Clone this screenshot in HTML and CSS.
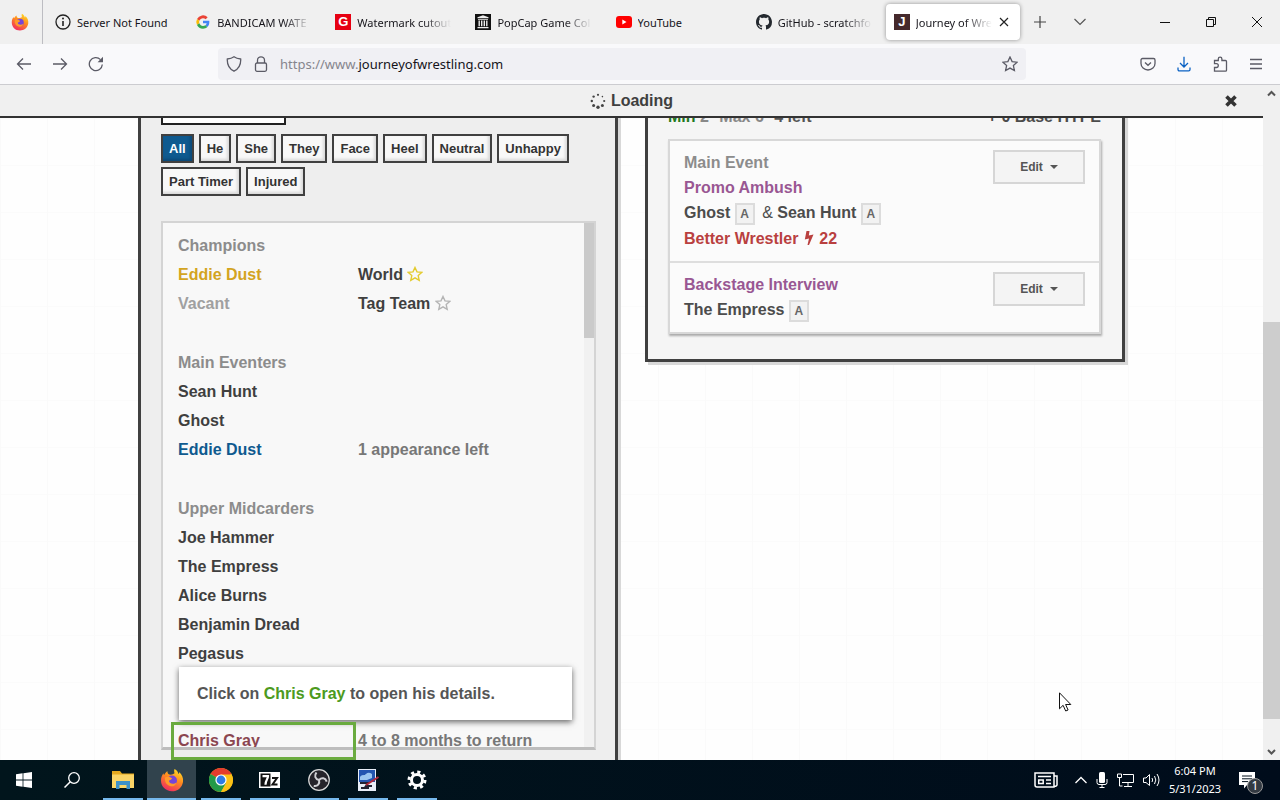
FILE: index.html
```html
<!DOCTYPE html>
<html lang="en">
<head>
<meta charset="utf-8">
<title>Journey of Wrestling</title>
<link rel="stylesheet" href="styles.css">
</head>
<body>
<header class="tabbar">
  <button class="pinned" aria-label="Firefox View">
    <svg width="18" height="18" viewBox="0 0 24 24"><use href="#fox"/></svg>
  </button>
  <div class="tabs">
    <div class="tab"><svg width="16" height="16" viewBox="0 0 16 16"><circle cx="8" cy="8" r="7" fill="none" stroke="#222" stroke-width="1.3"/><path d="M8 7v5" stroke="#222" stroke-width="1.6"/><circle cx="8" cy="4.6" r="1" fill="#222"/></svg><span class="tab-label">Server Not Found</span></div>
    <div class="tab"><svg width="16" height="16" viewBox="0 0 48 48"><path fill="#ea4335" d="M24 13c3 0 6 1 8 3l6-6A20 20 0 0 0 6 15l7 5c2-4 6-7 11-7z"/><path fill="#4285f4" d="M43 24c0-2 0-3-.4-4H24v8h11c-.6 3-2 5-4 6l6 5c4-3 6-9 6-15z"/><path fill="#fbbc05" d="M13 28a12 12 0 0 1 0-8l-7-5a20 20 0 0 0 0 18z"/><path fill="#34a853" d="M24 44c5 0 10-2 13-5l-6-5c-2 1-4 2-7 2-5 0-9-3-11-8l-7 5c3 7 10 11 18 11z"/></svg><span class="tab-label fade">BANDICAM WATE</span></div>
    <div class="tab"><span class="fav fav-red">G</span><span class="tab-label fade">Watermark cutout</span></div>
    <div class="tab"><svg width="16" height="16" viewBox="0 0 16 16"><path fill="#111" d="M0 0h16v16H0z"/><path fill="#eee" d="M8 1.300l5.500 2v1h-11v-1zM3 5h10v.8H3zM3.500 6.400h1.400v5.800H3.500zM6 6.400h1.400v5.800H6zM8.600 6.400H10v5.800H8.600zM11.100 6.400h1.400v5.800h-1.400zM2.500 13h11v1.300h-11z"/></svg><span class="tab-label fade">PopCap Game Col</span></div>
    <div class="tab"><svg width="16" height="16" viewBox="0 0 16 16"><rect y="2" width="16" height="12" rx="3" fill="#f00"/><path d="M6.300 5.500v5l4.200-2.500z" fill="#fff"/></svg><span class="tab-label">YouTube</span></div>
    <div class="tab"><svg width="16" height="16" viewBox="0 0 16 16"><path fill="#24292f" d="M8 0C3.580 0 0 3.580 0 8c0 3.540 2.290 6.530 5.470 7.590.4.070.55-.17.55-.38 0-.19-.01-.82-.01-1.490-2.010.37-2.530-.49-2.690-.94-.09-.23-.48-.94-.82-1.130-.28-.15-.68-.52-.01-.53.63-.01 1.080.58 1.230.82.72 1.210 1.870.87 2.330.66.07-.52.28-.87.51-1.070-1.780-.2-3.640-.89-3.640-3.950 0-.87.31-1.590.82-2.150-.08-.2-.36-1.020.08-2.120 0 0 .67-.21 2.200.82.64-.18 1.320-.27 2-.27s1.360.09 2 .27c1.530-1.040 2.200-.82 2.200-.82.44 1.100.16 1.920.08 2.120.51.56.82 1.270.82 2.150 0 3.070-1.870 3.750-3.650 3.950.29.25.54.73.54 1.480 0 1.070-.01 1.930-.01 2.200 0 .21.15.46.55.38A8.010 8.010 0 0 0 16 8c0-4.420-3.580-8-8-8z"/></svg><span class="tab-label fade">GitHub - scratchfo</span></div>
    <div class="tab active"><span class="fav fav-dark">J</span><span class="tab-label fade">Journey of Wre</span><button class="tab-close" aria-label="Close tab"><svg width="10" height="10" viewBox="0 0 10 10"><path d="M1 1l8 8M9 1l-8 8" stroke="#222" stroke-width="1.200"/></svg></button></div>
  </div>
  <button class="tool" aria-label="New tab"><svg width="12" height="12" viewBox="0 0 12 12"><path d="M6 0v12M0 6h12" stroke="#444" stroke-width="1.200"/></svg></button>
  <button class="tool" aria-label="List all tabs"><svg width="12" height="8" viewBox="0 0 12 8"><path d="M.5 1L6 6.500 11.500 1" fill="none" stroke="#555" stroke-width="1.200"/></svg></button>
  <div class="window-controls">
    <button aria-label="Minimize"><svg width="10" height="10" viewBox="0 0 10 10"><path d="M0 5.500h10" stroke="#111"/></svg></button>
    <button aria-label="Restore"><svg width="10" height="10" viewBox="0 0 10 10"><path d="M.5 2.500h7v7h-7zM2.500 2.500v-2h7v7h-2" fill="none" stroke="#111"/></svg></button>
    <button aria-label="Close"><svg width="10" height="10" viewBox="0 0 10 10"><path d="M0 0l10 10M10 0L0 10" stroke="#111"/></svg></button>
  </div>
</header>

<nav class="navbar">
  <div class="nav-left">
    <button aria-label="Back"><svg width="16" height="16" viewBox="0 0 16 16"><path d="M15 8H1.500M7 2.500L1.500 8 7 13.500"/></svg></button>
    <button aria-label="Forward"><svg width="16" height="16" viewBox="0 0 16 16"><path d="M1 8h13.500M9 2.500L14.500 8 9 13.500"/></svg></button>
    <button aria-label="Reload"><svg width="16" height="16" viewBox="0 0 16 16"><path d="M14.300 8.500A6.500 6.500 0 1 1 12.500 3.600"/><path d="M15 .8v5.400H9.600z" fill="#5b5b66" stroke="none"/></svg></button>
  </div>
  <div class="urlbar">
    <svg width="16" height="16" viewBox="0 0 16 16"><path d="M8 .8c2 1.500 4.200 2 6.700 2.200C15 9 12.500 13 8 15.200 3.500 13 1 9 1.300 3 3.800 2.800 6 2.300 8 .8z"/></svg>
    <svg width="16" height="16" viewBox="0 0 16 16"><rect x="2.500" y="7" width="11" height="8.300" rx="1.500"/><path d="M4.500 7V4.300a3.500 3.500 0 0 1 7 0V7"/></svg>
    <a class="url" href="#"><span class="dim">https://www.</span>journeyofwrestling.com</a>
    <button aria-label="Bookmark this page"><svg width="16" height="16" viewBox="0 0 16 16"><path d="M8 1l2.100 4.600 5 .6-3.700 3.400 1 5L8 12.100l-4.400 2.500 1-5L.9 6.200l5-.6z"/></svg></button>
  </div>
  <div class="nav-right">
    <button aria-label="Pocket"><svg width="16" height="16" viewBox="0 0 16 16"><path d="M2.500 2.500h11a1.500 1.500 0 0 1 1.500 1.500v3.500a7 6.500 0 0 1-14 0V4a1.500 1.500 0 0 1 1.500-1.500z"/><path d="M5 6.500l3 2.800 3-2.800"/></svg></button>
    <button aria-label="Downloads" class="download"><svg width="16" height="16" viewBox="0 0 16 16"><path d="M8 .8V11M4 7l4 4 4-4M2 11.500v2a1.300 1.300 0 0 0 1.300 1.300h9.400a1.300 1.300 0 0 0 1.300-1.300v-2"/></svg></button>
    <button aria-label="Extensions"><svg width="16" height="16" viewBox="0 0 16 16"><path d="M2.500 7.700V4.500h3.800V3a1.800 1.800 0 0 1 3.600 0v1.500h3.600a1 1 0 0 1 1 1v8.700a1 1 0 0 1-1 1h-11v-3.700H4.400a1.700 1.700 0 0 0 0-3.800z"/></svg></button>
    <button aria-label="Menu"><svg width="16" height="16" viewBox="0 0 16 16"><path d="M2 3.500h12M2 8h12M2 12.500h12"/></svg></button>
  </div>
</nav>

<div class="viewport">
  <main class="page">
    <div class="loading">
      <span class="loading-text"><svg width="16" height="16" viewBox="0 0 16 16" fill="#444"><circle cx="8" cy="1.800" r="1.100"/><circle cx="12.400" cy="3.600" r=".8"/><circle cx="14.200" cy="8" r="1.100"/><circle cx="12.400" cy="12.400" r="1.500"/><circle cx="8" cy="14.200" r="1.700"/><circle cx="3.600" cy="12.400" r="1.500"/><circle cx="1.800" cy="8" r="1.200"/><circle cx="3.600" cy="3.600" r="1.200"/></svg>Loading</span>
      <button class="dismiss" aria-label="Dismiss"><svg width="12" height="12" viewBox="0 0 12 12"><path d="M1.500 1.500l9 9M10.500 1.500l-9 9" stroke="#333" stroke-width="3.600"/></svg></button>
    </div>
    <div class="stage">
      <div class="columns">
        <section class="panel roster-panel">
          <input class="search" type="text" aria-label="Search roster">
          <div class="filters">
            <button class="filter on">All</button>
            <button class="filter">He</button>
            <button class="filter">She</button>
            <button class="filter">They</button>
            <button class="filter">Face</button>
            <button class="filter">Heel</button>
            <button class="filter">Neutral</button>
            <button class="filter">Unhappy</button>
            <button class="filter">Part Timer</button>
            <button class="filter">Injured</button>
          </div>
          <div class="roster-wrap">
            <div class="roster">
              <div class="groups">
                <div class="group">
                  <h2>Champions</h2>
                  <div class="row"><a class="gold" href="#">Eddie Dust</a><span>World <svg class="star" width="16" height="16" viewBox="0 0 16 16"><path stroke="#e3cb2e" d="M8 1.500l2 4.400 4.700.5-3.500 3.200 1 4.700L8 11.900l-4.200 2.400 1-4.700L1.300 6.400 6 5.900z"/></svg></span></div>
                  <div class="row"><span class="vacant">Vacant</span><span>Tag Team <svg class="star" width="16" height="16" viewBox="0 0 16 16"><path stroke="#b4b4b4" d="M8 1.500l2 4.400 4.700.5-3.500 3.200 1 4.700L8 11.900l-4.200 2.400 1-4.700L1.300 6.400 6 5.900z"/></svg></span></div>
                </div>
                <div class="group">
                  <h2>Main Eventers</h2>
                  <div class="row"><a href="#">Sean Hunt</a></div>
                  <div class="row"><a href="#">Ghost</a></div>
                  <div class="row"><a class="blue" href="#">Eddie Dust</a><span class="note">1 appearance left</span></div>
                </div>
                <div class="group">
                  <h2>Upper Midcarders</h2>
                  <div class="row"><a href="#">Joe Hammer</a></div>
                  <div class="row"><a href="#">The Empress</a></div>
                  <div class="row"><a href="#">Alice Burns</a></div>
                  <div class="row"><a href="#">Benjamin Dread</a></div>
                  <div class="row"><a href="#">Pegasus</a></div>
                </div>
                <div class="group last">
                  <div class="row"><a class="maroon" href="#">Chris Gray</a><span class="note">4 to 8 months to return</span></div>
                </div>
              </div>
              <div class="roster-scroll"><div class="roster-thumb"></div></div>
            </div>
            <div class="tip">Click on <b>Chris Gray</b> to open his details.</div>
            <div class="highlight"></div>
          </div>
        </section>

        <section class="panel card-panel">
          <div class="card-head"><span class="counts"><span class="min">Min</span> 2 <span class="max">Max 6</span> <span class="left">4 left</span></span><span>+ 0 Base HYPE</span></div>
          <div class="card">
            <article class="segment">
              <div class="segment-text">
                <p class="muted">Main Event</p>
                <p class="purple">Promo Ambush</p>
                <p>Ghost <span class="badge">A</span> <span class="amp">&amp;</span> Sean Hunt <span class="badge">A</span></p>
                <p class="red">Better Wrestler <svg width="10" height="14" viewBox="0 0 10 14"><path d="M2.500 0h3L4.800 4.500 9.500 3.500 5 14H3.500L5 7.500.8 8.500z" fill="#b9403f"/></svg> 22</p>
              </div>
              <button class="edit">Edit<span class="caret"></span></button>
            </article>
            <article class="segment">
              <div class="segment-text">
                <p class="purple">Backstage Interview</p>
                <p>The Empress <span class="badge">A</span></p>
              </div>
              <button class="edit">Edit<span class="caret"></span></button>
            </article>
          </div>
        </section>
      </div>
      <svg class="cursor" width="13" height="20" viewBox="0 0 13 20"><path d="M.5.800v16l3.600-3.500 2.600 5.700 2.400-1-2.500-5.500h5.200z" fill="#fff" stroke="#111"/></svg>
    </div>
  </main>
  <div class="scrollbar">
    <svg width="17" height="17" viewBox="0 0 17 17"><path d="M5 10.500l3.500-3.500 3.500 3.500" fill="none" stroke="#555" stroke-width="2"/></svg>
    <div class="track"><div class="thumb"></div></div>
    <svg width="17" height="17" viewBox="0 0 17 17"><path d="M5 7l3.500 3.500L12 7" fill="none" stroke="#555" stroke-width="2"/></svg>
  </div>
</div>

<footer class="taskbar">
  <button class="sys" aria-label="Start"><svg width="16" height="16" viewBox="0 0 16 16" fill="#fff"><path d="M0 2.200l6.600-.9v6.300H0zM7.400 1.200L16 0v7.600H7.400zM0 8.400h6.600v6.300L0 13.800zM7.400 8.400H16V16l-8.600-1.200z"/></svg></button>
  <button class="sys" aria-label="Search"><svg width="16" height="16" viewBox="0 0 16 16"><circle cx="10" cy="6" r="5.300" fill="none" stroke="#fff" stroke-width="1.300"/><path d="M6.300 9.700L.5 15.500" stroke="#fff" stroke-width="1.500"/></svg></button>
  <div class="apps">
    <button class="app" aria-label="File Explorer"><svg width="22" height="18" viewBox="0 0 22 18"><path fill="#e5a91f" d="M0 0h8l2 2.500h12V6H0z"/><path fill="#fbd567" d="M0 3.500h22V17H0z"/><path fill="#3d91c9" d="M4 10h14v8h-3.500v-4h-7v4H4z"/></svg></button>
    <button class="app current" aria-label="Firefox"><svg width="24" height="24" viewBox="0 0 24 24">
      <defs>
        <linearGradient id="flame" x1=".8" y1="0" x2=".3" y2="1"><stop offset="0" stop-color="#ffe226"/><stop offset=".45" stop-color="#ff8a1f"/><stop offset="1" stop-color="#f02a63"/></linearGradient>
        <g id="fox"><path fill="url(#flame)" d="M14.500 1c2.500 1.300 3.600 3.300 4 5 .7-.2.700-1.300.5-2 3 2.400 4.600 6 4 10-1 6-5.700 9.300-11 9.300C5.600 23.300 1 18.500 1 12.600 1 9.500 2 7 3.500 5.300c0 .8.200 1.300.6 1.700C5 5.200 6.200 4 7.500 3.300c-.2 1.500.5 2.800 1.800 3.200 2.200.5 4-.3 5.200-1.300-.5-1.500-.5-3 0-4.200z"/><circle cx="12" cy="12.500" r="5" fill="#7645d8"/><path fill="#ff9a2b" d="M5 9.500c2.500-1.200 5-.8 7.200 1-1 1.500-2.700 1.400-3.200 2.500 0 2.500 4.500 3.800 7.500 1.400-1 3.600-4 4.400-6.500 3.700C6.500 17 4.500 13.500 5 9.500z"/></g>
      </defs><use href="#fox"/></svg></button>
    <button class="app" aria-label="Chrome"><svg width="24" height="24" viewBox="0 0 24 24"><circle cx="12" cy="12" r="12" fill="#fbc116"/><path fill="#e33b2e" d="M12 12L1.600 6a12 12 0 0 1 20.800 0z"/><path fill="#229a48" d="M12 12L1.600 6A12 12 0 0 0 12 24l5.200-9z"/><path fill="#fbc116" d="M12 6.500h10.600A12 12 0 0 1 12 24l5-9z"/><circle cx="12" cy="12" r="5.600" fill="#fff"/><circle cx="12" cy="12" r="4.400" fill="#2d7be5"/></svg></button>
    <button class="app" aria-label="7-Zip"><svg width="21" height="16" viewBox="0 0 21 16"><path fill="#fff" d="M0 0h21v16H0z"/><path fill="#111" d="M1.500 1.500h10v13h-10z"/><path d="M3.500 4.200h5.500c0 3-2.500 4-2.500 8.500" fill="none" stroke="#fff" stroke-width="2.200"/><path d="M13 6h5l-4.500 6.500h5" fill="none" stroke="#111" stroke-width="2"/></svg></button>
    <button class="app" aria-label="OBS"><svg width="22" height="22" viewBox="0 0 22 22"><circle cx="11" cy="11" r="10.300" fill="#25232a" stroke="#d8d8d8" stroke-width="1.200"/><g fill="none" stroke="#d0d0d4" stroke-width="2"><path id="blade" d="M11 11c-4-1-5-4.500-2.500-7.500"/><use href="#blade" transform="rotate(120 11 11)"/><use href="#blade" transform="rotate(240 11 11)"/></g></svg></button>
    <button class="app" aria-label="Recorder"><svg width="22" height="22" viewBox="0 0 22 22"><path fill="#e8eef8" d="M1 0h18v22H1z"/><path fill="#2455b0" d="M2 1h16v12H2z"/><path fill="#9cc6f0" d="M3 8c2-3 4-1 6-3s4-1 6 0v4l-5 2H3z"/><path d="M3 14h8l-2 3h6M4 19h8" stroke="#223" stroke-width="2" fill="none"/><path d="M21.500 8L9 16" stroke="#b5283b" stroke-width="2"/></svg></button>
    <button class="app" aria-label="Settings"><svg width="20" height="20" viewBox="0 0 20 20"><circle cx="10" cy="10" r="5.500" fill="none" stroke="#fff" stroke-width="3"/><circle cx="10" cy="10" r="8" fill="none" stroke="#fff" stroke-width="3" stroke-dasharray="3.140 3.140"/></svg></button>
  </div>
  <div class="tray">
    <svg class="news" width="24" height="16" viewBox="0 0 24 16" fill="none" stroke="#fff" stroke-width="1.500"><path d="M1 1h19v14H3a2 2 0 0 1-2-2zM20 4h3v9a2 2 0 0 1-3 1"/><path d="M4 4.500h13M12 8h5M12 11.500h5M4.700 8h4.500v3.500H4.700z"/></svg>
    <svg width="12" height="8" viewBox="0 0 12 8"><path d="M.5 7L6 1.500 11.500 7" fill="none" stroke="#fff" stroke-width="1.300"/></svg>
    <svg width="12" height="16" viewBox="0 0 12 16"><rect x="3" width="6" height="11" rx="1.500" fill="#fff"/><path d="M1 7v3.500a2 2 0 0 0 2 2h6a2 2 0 0 0 2-2V7M6 12.500v3M3.500 15.500h5" fill="none" stroke="#fff"/></svg>
    <svg width="17" height="14" viewBox="0 0 17 14" fill="none" stroke="#fff"><path d="M6 1.500h10.500v8H5M11 9.500v4M7 13.500h8M.5 1h4v3.500h-4zM2.500 4.500v8.500h3"/></svg>
    <svg width="17" height="14" viewBox="0 0 17 14" fill="none" stroke="#fff"><path d="M.5 5h2.500l3.500-3.500v11L3 9.500H.5zM9 5q1.300 2 0 4M11.500 3q2.600 4 0 8M14 1q4 6 0 12"/></svg>
    <div class="clock"><span>6:04 PM</span><span>5/31/2023</span></div>
    <div class="notice"><svg width="17" height="17" viewBox="0 0 17 17"><path fill="#fff" d="M0 0h16v13H8l-3 3.500V13H0z"/><path d="M3 4h10M3 6.800h10M3 9.600h6" stroke="#03111d"/></svg><span class="notice-count">1</span></div>
  </div>
</footer>
</body>
</html>
```
FILE: styles.css
```css
* { box-sizing: border-box; }
body {
  margin: 0;
  height: 100vh;
  display: flex;
  flex-direction: column;
  overflow: hidden;
  font-family: "Liberation Sans", Arial, sans-serif;
  color: #3f3f3f;
  background: #fff;
}
button { padding: 0; border: 0; background: none; font: inherit; color: inherit; display: flex; align-items: center; justify-content: center; }
a { color: inherit; text-decoration: none; }
h2, p { margin: 0; font-size: 16px; }
svg { flex: none; }

/* Browser tabs */
.tabbar { flex: none; height: 44px; display: flex; align-items: center; background: #f0f0f0; font: 11px "Noto Sans", "Open Sans", sans-serif; color: #15141a; }
.pinned { width: 43px; height: 44px; border-right: 1px solid #bdbdc2; padding-right: 2px; }
.tabs { flex: 0 1 977px; min-width: 0; height: 44px; display: flex; }
.tab { flex: 1 1 0; min-width: 0; display: flex; align-items: center; gap: 6px; padding: 0 12px; }
.tab-label { flex: 1; min-width: 0; white-space: nowrap; overflow: hidden; }
.fade { mask-image: linear-gradient(to left, transparent, #000 28px); }
.tab.active { margin: 4px 0 4px 2px; padding: 0 10px 0 8px; border-radius: 4px; background: #fff; box-shadow: 0 0 4px rgba(0, 0, 0, .4); }
.tab-close { width: 12px; height: 20px; }
.fav { flex: none; width: 16px; height: 16px; text-align: center; color: #fff; font: bold 13px/16px "Liberation Sans", sans-serif; }
.fav-red { background: #e60012; }
.fav-dark { background: #45292c; }
.tool { width: 40px; height: 40px; }
.window-controls { margin-left: auto; display: flex; }
.window-controls button { width: 46px; height: 44px; }

/* Navigation */
.navbar { flex: none; height: 41px; display: flex; align-items: center; justify-content: space-between; background: #f9f9fb; border-bottom: 1px solid #ccccd0; }
.navbar svg { fill: none; stroke: #5b5b66; stroke-width: 1.3px; }
.nav-left { flex: 0 1 218px; padding-left: 6px; display: flex; }
.nav-left button { width: 36px; height: 32px; }
.urlbar { flex: 0 1 808px; height: 32px; display: flex; align-items: center; gap: 11px; padding: 0 8px; background: #f0f0f4; border-radius: 4px; }
.url { flex: 1; font: 13px "Noto Sans", "Open Sans", sans-serif; color: #15141a; }
.dim { color: #85858d; }
.nav-right { flex: 1; display: flex; justify-content: flex-end; padding-right: 6px; }
.nav-right button { width: 36px; height: 32px; }
.navbar .download svg { stroke: #0b62c4; }

/* Page */
.viewport { flex: 1; min-height: 0; display: flex; }
.page { flex: 1; min-width: 0; display: flex; flex-direction: column; }
.loading { position: relative; flex: none; height: 33px; display: flex; align-items: center; justify-content: center; background: #f0f0f0; border-bottom: 2px solid #333; font-size: 16px; font-weight: bold; }
.loading-text { display: flex; align-items: center; gap: 5px; }
.dismiss { position: absolute; right: 24px; top: 9px; width: 16px; height: 14px; }
.stage {
  position: relative;
  flex: 1;
  min-height: 0;
  overflow: hidden;
  padding: 0 24px;
  background-color: #fefefe;
  background-image: linear-gradient(90deg, #fafafa 1px, transparent 1px), linear-gradient(#fbfbfb 1px, transparent 1px);
  background-size: 47px 47px;
}
.columns { max-width: 987px; margin: -23px auto 0; display: grid; grid-template-columns: 1fr 1fr; gap: 27px; align-items: start; }
.panel { border: 3px solid #404040; padding: 0 20px; box-shadow: 3px 3px 0 #d8d8d8; }
.roster-panel { background: #eee; padding-right: 19px; padding-bottom: 40px; }
.search { display: block; width: 125px; height: 27px; border: 2px solid #222; background: #fff; }
.filters { display: flex; flex-wrap: wrap; gap: 4px 5px; margin-top: 9px; }
.filter { height: 29px; padding: 0 6px; border: 2px solid #404040; background: #f8f8f8; box-shadow: inset -2px -2px 3px #d8d8d8; font-size: 13px; font-weight: bold; color: #333; }
.filter.on { background: #0f5a8f; color: #fff; box-shadow: inset -2px -2px 3px #0b4876; }
.roster-wrap { position: relative; margin-top: 25px; }
.roster { height: 529px; overflow: hidden; display: flex; background: #f8f8f8; border: 2px solid #d4d4d4; border-bottom: 3px solid #bdbdbd; }
.groups { flex: 1; padding: 8px 0 0 15px; font-size: 16px; line-height: 29px; font-weight: bold; }
.group { margin-bottom: 30px; }
.group h2 { color: #8c8c8c; }
.group.last { margin-top: 58px; }
.row { display: grid; grid-template-columns: 180px 1fr; }
.star { vertical-align: -2px; fill: none; stroke-width: 1.4px; }
.gold { color: #d3a41f; }
.vacant { color: #a0a0a0; }
.blue { color: #0f5a8f; }
.maroon { color: #8b4650; }
.note { color: #777; }
.roster-scroll { flex: none; width: 10px; background: #f1f1f1; }
.roster-thumb { height: 22%; background: #cacaca; }
.tip { position: absolute; left: 18px; right: 24px; bottom: 30px; padding: 12px 18px; line-height: 29px; background: #fff; box-shadow: 0 2px 6px rgba(0, 0, 0, .6); font-size: 16px; font-weight: bold; color: #555; }
.tip b { color: #4c9a20; }
.highlight { position: absolute; left: 10px; bottom: -10px; width: 185px; height: 38px; border: 3px solid #6aab3f; }

.card-panel { background: #f5f5f5; padding-bottom: 25px; padding-right: 21px; }
.card-head { display: flex; justify-content: space-between; padding-top: 5px; line-height: 28px; font-size: 16px; font-weight: bold; color: #4c4c4c; }
.min { color: #1f7a1f; }
.counts { color: #888; }
.max { margin: 0 6px; }
.left { color: #555; }
.card { margin-top: 8px; border: 2px solid #d8d8d8; background: #fbfbfb; box-shadow: 1px 2px 2px #aaa; color: #4c4c4c; }
.segment { display: flex; justify-content: space-between; align-items: flex-start; padding: 9px 14px; }
.segment + .segment { border-top: 2px solid #dedede; }
.segment p { line-height: 26px; font-weight: bold; }
.segment p.muted, .segment p.purple { line-height: 25px; }
.segment p.muted { color: #8c8c8c; }
.purple { color: #995793; }
.red { color: #b9403f; }
.red svg { vertical-align: -1px; margin: 0 1px; }
.amp { font-weight: normal; margin-left: 3px; }
.badge { display: inline-block; width: 20px; height: 22px; line-height: 18px; text-align: center; vertical-align: middle; border: 2px solid #dcdcdc; background: #f2f2f2; font-size: 12px; color: #666; }
.edit { width: 92px; height: 34px; border: 2px solid #d6d6d6; background: #f4f4f4; font-size: 12px; font-weight: bold; color: #555; gap: 7px; }
.caret { border: 4px solid transparent; border-top-color: #555; border-bottom: 0; }
.cursor { position: absolute; left: 1059px; top: 574px; }

.scrollbar { flex: none; width: 17px; display: flex; flex-direction: column; background: #f0f0f0; }
.track { flex: 1; padding-top: 220px; padding-bottom: 24px; }
.thumb { height: 100%; background: #cdcdcd; }

/* Taskbar */
.taskbar { flex: none; height: 40px; display: flex; background: linear-gradient(90deg, #01151c, #000c1b); color: #fff; }
.sys { width: 48px; height: 40px; }
.apps { display: flex; padding-left: 2px; }
.app { position: relative; width: 49px; height: 40px; }
.app::after { content: ""; position: absolute; left: 5px; right: 4px; bottom: 0; height: 2px; background: #76b9ed; }
.app.current { background: #31434d; }
.app.current::after { left: 0; right: 0; }
.tray { margin-left: auto; display: flex; align-items: center; gap: 9px; padding-right: 17px; }
.news { margin-right: 8px; }
.clock { display: flex; flex-direction: column; width: 52px; font: 11px/18px "Noto Sans", "Open Sans", sans-serif; white-space: nowrap; align-items: center; }
.notice { position: relative; width: 24px; height: 17px; margin-left: 9px; }
.notice-count { position: absolute; left: 8px; top: 6px; width: 16px; height: 16px; border: 1px solid #999; border-radius: 50%; background: #333a42; font: 12px/14px "Noto Sans", sans-serif; text-align: center; }
```
